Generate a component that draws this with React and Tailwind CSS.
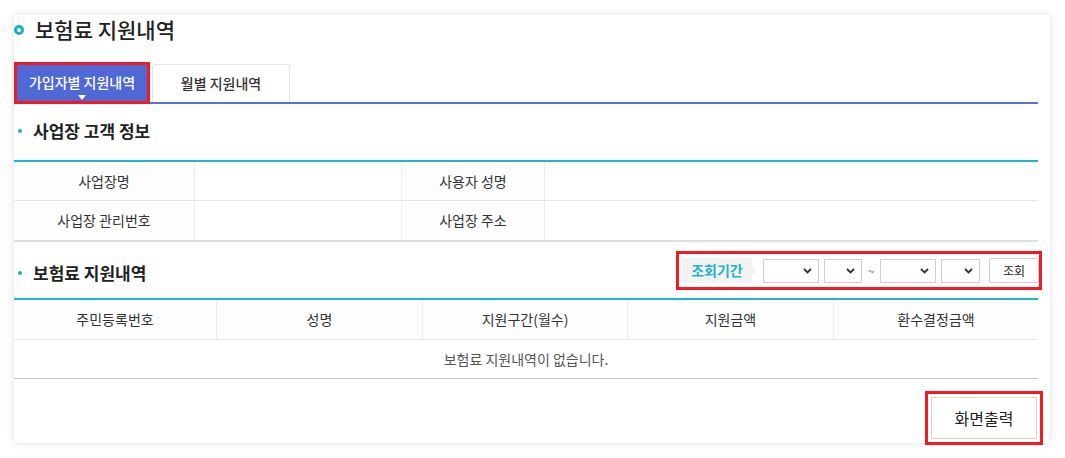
import { useState } from "react";

const FONT = { fontFamily: '"Noto Sans CJK KR", "Noto Sans", sans-serif' };

const INFO_ROWS = [
  ["사업장명", "사용자 성명"],
  ["사업장 관리번호", "사업장 주소"],
];

const COLUMNS = ["주민등록번호", "성명", "지원구간(월수)", "지원금액", "환수결정금액"];

function Chevron() {
  return (
    <svg width="9" height="6" viewBox="0 0 9 6" className="shrink-0">
      <path d="M1 1l3.5 3.5L8 1" fill="none" stroke="#333" strokeWidth="1.8" />
    </svg>
  );
}

function SelectBox({ w }) {
  return (
    <div className={`${w} h-[24px] border border-[#cfcfcf] bg-white flex items-center justify-end pr-[6px]`}>
      <Chevron />
    </div>
  );
}

function SectionTitle({ children }) {
  return (
    <h3 className="flex items-center gap-[11px] pl-[4px] text-[17px] font-bold text-[#222]">
      <span className="w-[4px] h-[4px] rounded-full bg-[#1ab3c6]" />
      {children}
    </h3>
  );
}

export default function App() {
  const [tab, setTab] = useState("member");

  return (
    <div className="w-[1065px] h-[458px] bg-white pt-[15px] pl-[14px]" style={FONT}>
      <section className="w-[1036px] h-[428px] bg-white pr-[12px] shadow-[0_0_8px_rgba(0,0,0,0.12)]">
        {/* 제목 */}
        <div className="h-[47px] flex items-start">
          <span className="w-[10px] h-[10px] rounded-full border-[3px] border-[#15b0c3] mt-[10px] ml-[0px]" />
          <h2 className="ml-[11px] text-[21px] leading-[28px] font-medium text-[#222]">보험료 지원내역</h2>
        </div>

        {/* 탭 */}
        <div className="flex items-end border-b-2 border-[#5a70d9] h-[42px]">
          <button
            onClick={() => setTab("member")}
            className="relative w-[136px] h-[42px] bg-[#4f68d6] border-[3px] border-[#ef1c25] text-white text-[14px] font-medium -mb-[2px] pb-[2px]"
          >
            가입자별 지원내역
            <span className="absolute left-1/2 -translate-x-1/2 bottom-[1px] w-0 h-0 border-l-[4px] border-r-[4px] border-t-[5px] border-l-transparent border-r-transparent border-t-white" />
          </button>
          <button
            onClick={() => setTab("month")}
            className="ml-[2px] w-[138px] h-[38px] bg-white border border-b-0 border-[#e6e6e6] rounded-t-[3px] text-[14px] text-[#333] font-medium"
          >
            월별 지원내역
          </button>
        </div>

        {/* 사업장 고객 정보 */}
        <div className="h-[56px] flex items-center pb-[2px]">
          <SectionTitle>사업장 고객 정보</SectionTitle>
        </div>
        <div className="border-t-2 border-[#1ab8ca] border-b-2 border-b-[#dedede]">
          {INFO_ROWS.map(([a, b], i) => (
            <div
              key={i}
              className={`grid grid-cols-[181px_207px_143px_1fr] h-[39px] text-[14px] text-[#333] ${i === 0 ? "border-b border-[#e8e8e8]" : ""}`}
            >
              <div className="flex items-center justify-center bg-[#fdfdfd] border-r border-[#ececec]">{a}</div>
              <div className="border-r border-[#ececec]" />
              <div className="flex items-center justify-center bg-[#fdfdfd] border-r border-[#ececec]">{b}</div>
              <div />
            </div>
          ))}
        </div>

        {/* 보험료 지원내역 */}
        <div className="h-[56px] flex items-center justify-between">
          <div className="pt-[6px]">
            <SectionTitle>보험료 지원내역</SectionTitle>
          </div>
          <div className="mr-[-4px] mt-[1px] w-[366px] h-[39px] border-[3px] border-[#ef1c25] flex items-center pl-[3px] gap-[5px]">
            <div className="relative h-[25px] w-[70px] bg-[#f2f2f2] rounded-[2px] flex items-center justify-center text-[14px] font-bold text-[#22b2c4]">
              조회기간
              <span className="absolute right-[-4px] top-1/2 -translate-y-1/2 w-0 h-0 border-t-[4px] border-b-[4px] border-l-[4px] border-t-transparent border-b-transparent border-l-[#f2f2f2]" />
            </div>
            <div className="ml-[6px]">
              <SelectBox w="w-[56px]" />
            </div>
            <SelectBox w="w-[38px]" />
            <span className="text-[12px] text-[#666] px-[1px]">~</span>
            <SelectBox w="w-[56px]" />
            <SelectBox w="w-[39px]" />
            <button className="ml-[4px] w-[50px] h-[25px] border border-[#cfcfcf] rounded-[2px] bg-white text-[12px] text-[#222]">
              조회
            </button>
          </div>
        </div>
        <div className="border-t-2 border-[#1ab8ca] border-b border-b-[#c8c8c8]">
          <div className="grid grid-cols-[203px_206px_205px_206px_1fr] h-[40px] bg-[#fdfdfd] border-b border-[#e8e8e8] text-[14px] text-[#333]">
            {COLUMNS.map((c, i) => (
              <div
                key={c}
                className={`flex items-center justify-center ${i < COLUMNS.length - 1 ? "border-r border-[#ececec]" : ""}`}
              >
                {c}
              </div>
            ))}
          </div>
          <div className="h-[38px] flex items-center justify-center text-[14px] text-[#555]">
            보험료 지원내역이 없습니다.
          </div>
        </div>

        {/* 화면출력 */}
        <div className="flex justify-end pt-[12px] mr-[-5px]">
          <div className="border-[3px] border-[#ef1c25] p-[3px]">
            <button className="w-[106px] h-[42px] border border-[#d6d6d6] bg-white text-[16px] text-[#222]">
              화면출력
            </button>
          </div>
        </div>
      </section>
    </div>
  );
}
